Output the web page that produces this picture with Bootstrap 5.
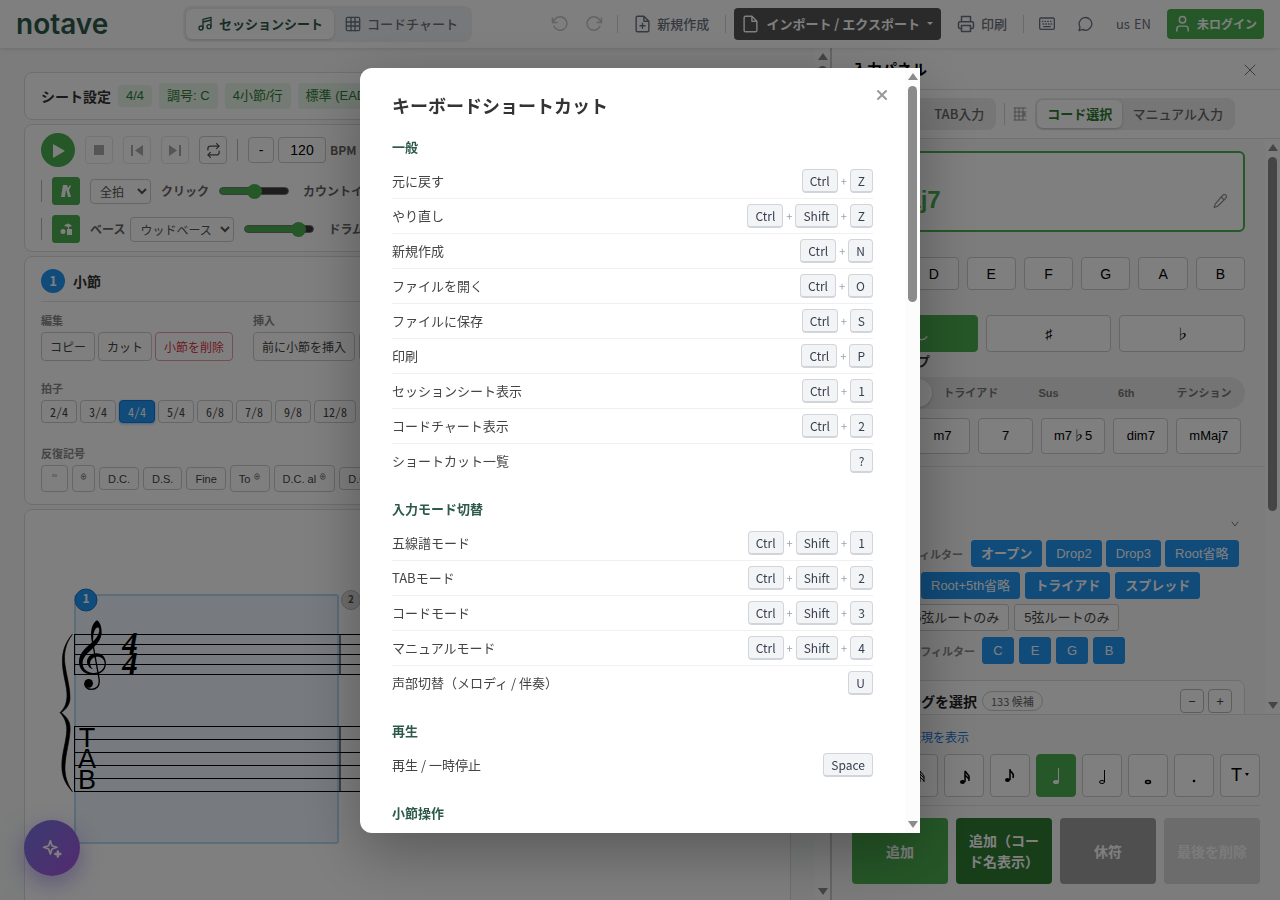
<!DOCTYPE html>
<html lang="ja">
<head>
<meta charset="utf-8">
<meta name="viewport" content="width=device-width, initial-scale=1">
<title>notave</title>
<link href="https://cdn.jsdelivr.net/npm/bootstrap@5.3.0/dist/css/bootstrap.min.css" rel="stylesheet">
<style>
:root{--jp:"Noto Sans CJK JP",sans-serif;--latin:"Liberation Sans","Noto Sans CJK JP",sans-serif;--green:#4caf50;--blue:#2196f3;--line:#ddd}
body{font:13px/20px var(--jp);color:#333;height:100vh;overflow:hidden;background:#f6f9f7}
button,input,select{font-family:inherit}
svg{flex:none}
.ico{fill:none;stroke:currentColor;stroke-width:2;stroke-linecap:round;stroke-linejoin:round}
.plain{border:0;background:none;padding:0}
.vline{width:1px;background:#d5d5d5;height:18px;flex:none}

.topbar{height:48px;background:#fff;box-shadow:0 1px 4px rgba(0,0,0,.12);z-index:2}
.brand{font:600 28px/34px Inter,sans-serif;color:#2d5a4a;width:167px;text-decoration:none}
.seg{background:#eff1f5;border-radius:8px;padding:3px}
.seg button{height:30px;border:0;border-radius:6px;background:none;color:#6b7280;font-weight:500;padding:0 11px;display:flex;align-items:center;gap:6px;white-space:nowrap}
.seg .on{background:#fff;color:#2d5a4a;font-weight:700;box-shadow:0 1px 3px rgba(0,0,0,.15)}
.tool{height:32px;border:0;background:none;color:#6b7280;padding:0 8px;display:flex;align-items:center;gap:6px;font-weight:500;white-space:nowrap}
.tool.sq{width:30px;padding:0;justify-content:center}
.tool.dim{opacity:.4}
.tool.dark{background:#555;color:#fff;border-radius:4px;font-weight:700;gap:7px}
.tool.login{background:var(--green);color:#fff;border-radius:4px;font-weight:700;font-size:12px;height:30px;padding:0 7px}

.sbar{width:15px;flex:none;background:#fcfcfc;padding:5px 3px;display:flex;flex-direction:column;align-items:center}
.sbar i{border:5px solid transparent;border-top-width:0;border-bottom:7px solid #8b8b8b;margin-bottom:6px}
.sbar i:last-child{border-bottom-width:0;border-top:7px solid #8b8b8b;margin:auto 0 0}
.sbar b{width:9px;border-radius:5px;background:#8b8b8b}

.box{background:#fff;border:1px solid var(--line);border-radius:8px;padding:0 16px;overflow:hidden;white-space:nowrap}
.chip{background:#e8f5e9;color:#2e7d32;border-radius:4px;padding:3px 8px;font:13px/20px var(--latin)}
.chip.low{padding-block:1px}
.name{font-size:14px;color:#333}
.round-play{width:34px;height:34px;border-radius:50%;background:var(--green);border:0;color:#fff;padding:0}
.row3{gap:10px;height:34px}
.row3.mid{height:48px}
.row3.end{height:28px}
.row3 .vline{height:22px;background:#bbb}
.sq28{width:28px;height:28px;border:1px solid #ccc;border-radius:4px;background:#fff;color:#555;padding:0;flex:none;display:flex;align-items:center;justify-content:center}
.sq28:disabled{border-color:#e6e6e6;color:#aaa}
.sq28.go{background:var(--green);border-color:var(--green);color:#fff;border-radius:3px}
.field{border:1px solid #ccc;border-radius:4px;background:#fff;color:#000;text-align:center;padding:0;width:48px;height:26px;font:14px/20px var(--latin)}
button.field{width:26px}
select.pick{height:25px;border:1px solid #ccc;border-radius:4px;background:#fff;color:#555;font-size:12px;padding:0 5px;flex:none;width:61px}
select.pick.wide{width:104px}
.lbl{font-size:12px;font-weight:700;color:#666}
.slide{appearance:none;-webkit-appearance:none;width:70px;height:16px;background:none;flex:none;margin:0}
.slide::-webkit-slider-runnable-track{height:8px;border-radius:4px;border:1px solid #777;background:linear-gradient(to right,var(--green) var(--v),#3b3b3b var(--v))}
.slide::-webkit-slider-thumb{-webkit-appearance:none;width:15px;height:15px;margin-top:-4px;border-radius:50%;background:var(--green)}
.cap{font-size:11px;line-height:16px;font-weight:700;color:#888;white-space:nowrap}
.gap3{gap:3px}
.gap5{gap:5px}
.mini{border:1px solid #ccc;border-radius:4px;background:#fff;color:#444;padding:0 8px;font-size:12px;height:29px;flex:none}
.mini.del{color:#dc3545;border-color:#e79aa2}
.mini.sig{height:23px;font:500 12px/20px "Noto Sans Mono CJK JP",var(--jp)}
.mini.sig.on{background:var(--blue);border-color:#1976d2;color:#fff;box-shadow:0 1px 3px rgba(33,150,243,.5)}
.mini.rep{height:23px;font:11px/20px var(--latin)}
.mini.rep.tall{height:27px}
.mini.rep sup{font-size:7px}
.mini.sign{width:27px;padding:0}
.mini.sign.slim{width:23px}
.num{width:24px;height:24px;border-radius:50%;background:var(--blue);color:#fff;font-weight:700;text-align:center;line-height:24px}
.stage{overflow:hidden;padding:24px 24px 0;min-width:0}
.barhead{height:45px;padding-top:4px}
.group1{gap:20px;padding-top:10px;height:75px}
.group2{height:65px;padding-top:3px}
.group3{padding-top:3px}

.panel{width:450px;flex:none;border-left:2px solid #ccc;background:#fff}
.panelhead{height:42px;padding:0 24px 0 20px}
.panelhead strong{font-size:15px;color:#000}
.paneltabs{height:49px;padding:0 45px 0 20px;gap:8px}
.bodybg{background:#f8f8f8}
.seg2{background:#ececec;border-radius:8px;padding:2px}
.seg2 button{border:0;background:none;border-radius:6px;height:28px;color:#666;padding:0 10px;font-weight:500;white-space:nowrap}
.seg2 .on{background:#fff;color:#2e7d32;font-weight:700;box-shadow:0 1px 3px rgba(0,0,0,.2)}
.chord{border:2px solid var(--green);border-radius:6px;height:81px;color:var(--green);background:#fff;font:700 24px/30px var(--latin)}
.picker{padding:12px 20px;height:328px}
.keys{margin-top:25px;height:33px}
.keys.tallkeys{height:37px}
.key{border:1px solid #ccc;border-radius:4px;background:#fff;color:#000;font:14px/20px var(--latin);padding:0;flex:1 1 0}
.key.go{background:var(--green);border-color:var(--green);color:#fff}
.typehead{line-height:18px;padding-bottom:7px}
.qual{height:36px;min-width:55px;flex:none;padding:0 12px;font-size:13px}
.pill{background:#e9e9e9;border-radius:16px;height:32px;padding:2px;margin-bottom:9px}
.pill button{flex:1 1 0;border:0;background:none;border-radius:14px;font:700 11px/16px var(--latin);color:#777;padding:0}
.pill .on{background:#fff;color:#333;box-shadow:0 1px 3px rgba(0,0,0,.2)}
.filters{padding:47px 20px 0}
.fold{height:26px;padding:7px 6px}
.flt{border:1px solid var(--blue);border-radius:3px;background:var(--blue);color:#fff;font:700 13px/20px var(--latin);height:27px;padding:0 9px;min-width:32px;white-space:nowrap;flex:none}
.flt.lat{font-weight:400}
.flt.first{width:64px}
.flt.off{background:#fff;border-color:#ccc;color:#444;font-weight:400}
.frow{margin-bottom:5px}
.frow.indent{padding-left:52px;margin-bottom:6px}
.cap.w1{width:115px;flex:none;padding-right:4px}
.cap.w2{width:125px;flex:none;padding-right:2px}
.voices{margin-top:16px;height:90px;padding:8px 12px}
.voices strong{font-size:14px;width:109px;line-height:24px;color:#222}
.count{border:1px solid #ccc;border-radius:12px;font-size:11px;line-height:18px;color:#666;padding:0 8px;margin-top:2px}
.step{width:24px;height:24px;border:1px solid #bbb;border-radius:4px;background:#fff;color:#444;padding:0;line-height:20px}
.foot{padding:12px 20px 16px}
.foot a{color:#1976d2;font-size:12px;padding-left:9px}
.notes{gap:6px;padding:7px 0 8px}
.note{width:40px;height:43px;border:1px solid #ccc;border-radius:4px;background:#fff;color:#000;padding:0;flex:none}
.note.on{background:var(--green);border-color:var(--green);color:#fff}
.note span{font:18px/20px var(--latin)}
.big{height:66px;border:0;border-radius:4px;color:#fff;font-weight:700;font-size:14px;line-height:21px;flex:1 1 0;padding:0 8px}
.big.b1{background:#4caf50}.big.b2{background:#2e7d32}.big.b3{background:#9e9e9e}.big.b4{background:#d8d8d8;color:#f6f6f6}

.fab{position:absolute;left:24px;bottom:24px;width:56px;height:56px;border:0;border-radius:50%;color:#fff;background:linear-gradient(135deg,#7477e0,#a855e0);box-shadow:0 8px 24px rgba(124,92,230,.5);z-index:3}

.modal{background:rgba(0,0,0,.5);--bs-modal-width:560px}
.modal-content{height:85vh;border:0;border-radius:12px 0 0 12px;flex-direction:row;box-shadow:0 20px 60px rgba(0,0,0,.3);color:#444}
.sheet{padding:0 32px;overflow:hidden;position:relative;border-radius:12px 0 0 12px}
.sheet h2{font-size:18px;line-height:26px;font-weight:700;color:#333;margin:24px 0 19px}
.sheet h3{font-size:13px;line-height:20px;font-weight:700;color:#2d5a4a;margin:0 0 7px}
.sheet ul{margin:0 0 20px;padding:0;list-style:none}
.sheet li{display:flex;justify-content:space-between;align-items:center;height:35px;border-bottom:1px solid #f0f0f0}
.sheet li:last-child{border:0}
.sheet li>span{display:flex;align-items:center;gap:3px;font-size:11px;color:#9ca3af}
kbd{background:#f3f4f6;color:#374151;border:1px solid #d1d5db;border-bottom-width:2px;border-radius:4px;padding:0 7px;font:12px/21px var(--jp);min-width:23px;text-align:center}
.shut{position:absolute;right:13px;top:17px;width:20px;height:20px;border:0;background:none;padding:0;color:#999;display:flex;align-items:center;justify-content:center}
</style>
</head>
<body class="d-flex flex-column">

<header class="topbar d-flex align-items-center px-3 flex-shrink-0">
  <a class="brand" href="#">notave</a>
  <nav class="seg d-flex">
    <button class="on"><svg class="ico" width="16" height="16" viewBox="0 0 24 24"><path d="M9 18V5l12-3v14M9 9l12-3"/><circle cx="6" cy="18" r="3"/><circle cx="18" cy="16" r="3"/></svg>セッションシート</button>
    <button><svg class="ico" width="16" height="16" viewBox="0 0 24 24"><rect x="2" y="2" width="20" height="20" rx="2"/><path d="M2 9h20M2 15h20M9 2v20M15 2v20"/></svg>コードチャート</button>
  </nav>
  <div class="d-flex align-items-center gap-2 ms-auto">
    <div class="d-flex gap-1">
      <button class="tool sq dim" disabled aria-label="元に戻す"><svg class="ico" width="18" height="18" viewBox="0 0 24 24"><path d="M2 4v6h6"/><path d="M4 15a9 9 0 1 0 1-9L2 10"/></svg></button>
      <button class="tool sq dim" disabled aria-label="やり直し"><svg class="ico" width="18" height="18" viewBox="0 0 24 24"><path d="M22 4v6h-6"/><path d="M20 15a9 9 0 1 1-1-9l3 4"/></svg></button>
    </div>
    <span class="vline"></span>
    <button class="tool"><svg class="ico" width="17" height="18" viewBox="0 0 24 24"><path d="M14 1H5a2 2 0 0 0-2 2v18a2 2 0 0 0 2 2h14a2 2 0 0 0 2-2V8zM14 1v7h7M12 11v7M8.500 14.500h7"/></svg>新規作成</button>
    <span class="vline"></span>
    <button class="tool dark"><svg class="ico" width="17" height="18" viewBox="0 0 24 24"><path d="M14 1H5a2 2 0 0 0-2 2v18a2 2 0 0 0 2 2h14a2 2 0 0 0 2-2V8zM14 1v7h7"/></svg>インポート / エクスポート<svg width="6" height="4" viewBox="0 0 6 4"><path d="M0 0h6L3 3z" fill="currentColor"/></svg></button>
    <button class="tool"><svg class="ico" width="18" height="18" viewBox="0 0 24 24"><path d="M6 9V2h12v7M6 18H4a2 2 0 0 1-2-2v-5a2 2 0 0 1 2-2h16a2 2 0 0 1 2 2v5a2 2 0 0 1-2 2h-2"/><path d="M6 14h12v8H6z"/></svg>印刷</button>
    <span class="vline"></span>
    <button class="tool sq" aria-label="キーボード"><svg class="ico" width="16" height="16" viewBox="0 0 24 24"><rect x="1" y="3" width="22" height="17" rx="2"/><path d="M5 8h1M9 8h1M13 8h1M17 8h1M6 12h1M10 12h1M14 12h1M18 12h1M7 16h10"/></svg></button>
    <button class="tool sq" aria-label="チャット"><svg class="ico" width="16" height="16" viewBox="0 0 24 24"><path d="M3 22l1.500-5.500A9.500 9.500 0 1 1 8 20z"/></svg></button>
    <button class="tool fw-normal gap-1"><span>us</span>EN</button>
    <button class="tool login"><svg class="ico" width="17" height="18" viewBox="0 0 24 24"><path d="M20 22v-3a4 4 0 0 0-4-4H8a4 4 0 0 0-4 4v3"/><circle cx="12" cy="6" r="4.500"/></svg>未ログイン</button>
  </div>
</header>

<div class="d-flex flex-grow-1" style="min-height:0">
  <main class="stage flex-grow-1">
    <section class="box d-flex align-items-center mb-1" style="height:48px;gap:7px">
      <strong class="name">シート設定</strong>
      <span class="chip low">4/4</span><span class="chip">調号: C</span><span class="chip">4小節/行</span><span class="chip">標準 (EADGBE)</span>
    </section>

    <section class="box mb-1 pt-2" style="height:128px">
      <div class="row3 d-flex align-items-center">
        <button class="round-play" aria-label="再生"><svg width="14" height="16" viewBox="0 0 14 16"><path d="M2 1l12 7-12 7z" fill="currentColor"/></svg></button>
        <button class="sq28" disabled aria-label="停止"><svg width="10" height="10"><rect width="10" height="10" fill="currentColor"/></svg></button>
        <button class="sq28" disabled aria-label="前へ"><svg width="12" height="11"><path d="M0 0h2v11H0zM12 0v11L4 5.500z" fill="currentColor"/></svg></button>
        <button class="sq28" disabled aria-label="次へ"><svg width="12" height="11"><path d="M10 0h2v11h-2zM0 0v11l8-5.500z" fill="currentColor"/></svg></button>
        <button class="sq28" aria-label="ループ"><svg class="ico" width="15" height="15" viewBox="0 0 24 24"><path d="M17 1l4 4-4 4M3 11V9a4 4 0 0 1 4-4h14M7 23l-4-4 4-4M21 13v2a4 4 0 0 1-4 4H3"/></svg></button>
        <span class="vline"></span>
        <div class="d-flex align-items-center gap-1"><button class="field">-</button><input class="field" id="bpm" value="120"><label class="lbl" for="bpm">BPM</label></div>
      </div>
      <div class="row3 mid d-flex align-items-center">
        <span class="vline"></span>
        <button class="sq28 go" aria-label="メトロノーム"><svg width="12" height="14"><path d="M3 1h4l1 3 2-3 1 1-2 4 2 7H8L6 5l-1 8H1z" fill="currentColor"/></svg></button>
        <select class="pick" aria-label="拍"><option>全拍</option></select>
        <label class="lbl" for="clk">クリック</label>
        <input class="slide" type="range" id="clk" value="50" style="--v:50%">
        <span class="lbl ms-1">カウントイン</span>
      </div>
      <div class="row3 end d-flex align-items-center">
        <span class="vline"></span>
        <button class="sq28 go" aria-label="バッキング"><svg width="14" height="14"><circle cx="4" cy="9.500" r="2.500" fill="currentColor"/><path d="M5 4q4-5 8 0l-3 1v2h3v6H8V7h1V5z" fill="currentColor"/></svg></button>
        <div class="d-flex align-items-center gap5"><label class="lbl" for="bas">ベース</label><select class="pick wide" id="bas"><option>ウッドベース</option></select></div>
        <input class="slide" type="range" value="86" aria-label="ベース音量" style="--v:80%">
        <span class="lbl ms-1">ドラム</span>
      </div>
    </section>

    <section class="box mb-1" style="height:249px">
      <div class="barhead d-flex align-items-center gap-2 border-bottom"><span class="num">1</span><strong class="name">小節</strong></div>
      <div class="group1 d-flex">
        <div><div class="cap gap3 mb-1">編集</div><div class="d-flex gap3"><button class="mini">コピー</button><button class="mini">カット</button><button class="mini del">小節を削除</button></div></div>
        <div><div class="cap mb-1">挿入</div><div class="d-flex gap-1"><button class="mini">前に小節を挿入</button><button class="mini">後に小節を挿入</button></div></div>
      </div>
      <div class="group2"><div class="cap mb-1">拍子</div><div class="d-flex gap3"><button class="mini sig">2/4</button><button class="mini sig">3/4</button><button class="mini sig on">4/4</button><button class="mini sig">5/4</button><button class="mini sig">6/8</button><button class="mini sig">7/8</button><button class="mini sig">9/8</button><button class="mini sig">12/8</button></div></div>
      <div class="group3"><div class="cap mb-1">反復記号</div><div class="d-flex align-items-center gap-1"><button class="mini rep tall sign"><sup>𝄉</sup></button><button class="mini rep tall sign slim"><sup>⊕</sup></button><button class="mini rep">D.C.</button><button class="mini rep">D.S.</button><button class="mini rep">Fine</button><button class="mini rep tall">To <sup>⊕</sup></button><button class="mini rep tall">D.C. al <sup>⊕</sup></button><button class="mini rep">D.C. al Fine</button></div></div>
    </section>

    <section class="box p-0" style="height:420px">
      <svg width="100%" height="400">
        <g transform="translate(-25,-510)">
          <rect x="75" y="595" width="263" height="248" rx="2" fill="#2196f3" fill-opacity=".08" stroke="#b4dcf4" stroke-width="2"/>
          <g stroke="#000"><path d="M74 634.500H800M74 644.500H800M74 654.500H800M74 664.500H800M74 674.500H800M74 726.500H800M74 739.500H800M74 752.500H800M74 765.500H800M74 778.500H800M74 791.500H800M74.500 634v41M74.500 726v66M340 634v41M340 726v66"/></g>
          <g transform="translate(0,580) scale(.3333)">
            <path d="M217 163C190 195 185 225 188 260C192 300 205 330 200 360C197 380 188 390 180 398C188 406 197 418 200 440C203 470 188 510 186 545C184 580 190 605 217 635C198 605 192 580 196 545C200 505 212 470 210 440C209 420 196 408 184 398C198 388 209 375 210 355C211 325 200 290 195 255C190 220 197 190 217 163Z" stroke="#000" stroke-width="2"/>
            <path d="M277 192C268 155 276 130 291 121C300 126 306 142 305 160C302 192 272 207 254 230C240 250 250 276 278 279C300 280 314 268 314 250C313 236 303 229 290 230C275 232 268 244 271 255C273 262 276 265 280 268C266 264 260 252 261 243C263 230 274 220 290 220C308 220 318 234 318 252C317 272 300 285 277 284C250 283 236 265 237 243C238 215 262 200 281 182C296 168 301 150 296 143C288 138 277 155 280 190Z"/>
            <path d="M278 188L297 295C301 320 288 328 274 328C262 328 255 320 254 310" fill="none" stroke="#000" stroke-width="4"/><circle cx="266" cy="310" r="13"/>
          </g>
          <g font-family="Liberation Serif, serif" font-weight="700" font-style="italic" font-size="31" text-anchor="middle"><text x="130" y="654">4</text><text x="130" y="674">4</text></g>
          <g font-family="Liberation Sans, sans-serif" font-size="27" text-anchor="middle"><text x="87" y="747">T</text><text x="87" y="768">A</text><text x="87" y="789">B</text></g>
          <circle cx="86" cy="600" r="11" fill="#2196f3" stroke="#1976d2"/><circle cx="351" cy="600" r="9.500" fill="#ddd" stroke="#bbb"/>
          <g font-family="Noto Sans CJK JP, sans-serif" font-weight="700" text-anchor="middle"><text x="86" y="603" font-size="12" fill="#fff">1</text><text x="351" y="603" font-size="10" fill="#555">2</text></g>
        </g>
      </svg>
    </section>
  </main>
  <div class="sbar"><i></i><b style="height:400px"></b><i></i></div>

  <aside class="panel d-flex flex-column">
    <div class="panelhead d-flex align-items-center justify-content-between border-bottom flex-shrink-0"><strong>入力パネル</strong><button class="plain" aria-label="閉じる"><svg class="ico" width="12" height="12" viewBox="0 0 12 12" stroke="#666"><path d="M1 1l10 10M11 1L1 11" stroke="#777" stroke-width="1"/></svg></button></div>
    <div class="paneltabs d-flex align-items-center border-bottom flex-shrink-0">
      <div class="seg2 d-flex flex-grow-1 justify-content-end"><button class="px-1">五線譜</button><button>TAB入力</button></div>
      <span class="vline" style="height:22px"></span>
      <svg class="ico" width="14" height="14" viewBox="0 0 14 14" style="stroke-width:1;color:#999"><path d="M1 1h12M1 5h12M1 9h12M1 13h12M2 1v12M6 1v12M10 1v12"/><circle cx="11" cy="7" r="1"/></svg>
      <div class="seg2 d-flex"><button class="on">コード選択</button><button>マニュアル入力</button></div>
    </div>
    <div class="d-flex flex-grow-1 bodybg" style="min-height:0">
      <div class="flex-grow-1 overflow-hidden" style="min-width:0">
        <div class="picker border-bottom">
          <div class="chord d-flex align-items-center justify-content-between px-3"><span class="pt-3">CMaj7</span><button class="plain pt-3" aria-label="編集"><svg class="ico" width="14" height="14" viewBox="0 0 24 24" style="color:#888"><path d="M17 2a3 3 0 0 1 5 5L8 21l-6 2 2-6zM14 5l5 5"/></svg></button></div>
          <div class="keys d-flex gap-2"><button class="key">C</button><button class="key">D</button><button class="key">E</button><button class="key">F</button><button class="key">G</button><button class="key">A</button><button class="key">B</button></div>
          <div class="keys tallkeys d-flex gap-2"><button class="key go">なし</button><button class="key">♯</button><button class="key">♭</button></div>
          <div class="typehead fw-bold">コードタイプ</div>
          <div class="pill d-flex"><button class="on">7th</button><button>トライアド</button><button>Sus</button><button>6th</button><button>テンション</button></div>
          <div class="d-flex gap-2"><button class="key qual">M7</button><button class="key qual">m7</button><button class="key qual">7</button><button class="key qual">m7♭5</button><button class="key qual">dim7</button><button class="key qual">mMaj7</button></div>
        </div>
        <div class="filters">
          <div class="fold d-flex justify-content-end"><svg class="ico" width="8" height="6" viewBox="0 0 8 6" style="color:#777;stroke-width:1"><path d="M1 1l3 4 3-4"/></svg></div>
          <div class="frow d-flex gap-1 align-items-center"><span class="cap w1 text-end">ボイシングフィルター</span><button class="flt">オープン</button><button class="flt lat">Drop2</button><button class="flt lat">Drop3</button><button class="flt lat">Root省略</button></div>
          <div class="frow d-flex gap5"><button class="flt lat first px-0">5th省略</button><button class="flt lat">Root+5th省略</button><button class="flt">トライアド</button><button class="flt">スプレッド</button></div>
          <div class="frow indent d-flex gap5"><button class="flt off">6弦ルートのみ</button><button class="flt off">5弦ルートのみ</button></div>
          <div class="d-flex align-items-center gap5"><span class="cap w2 text-end">構成音フィルター</span><button class="flt lat">C</button><button class="flt lat">E</button><button class="flt lat">G</button><button class="flt lat">B</button></div>
          <div class="box voices d-flex align-items-start gap-2"><strong class="text-end">ボイシングを選択</strong><span class="count">133 候補</span><div class="d-flex gap-1 ms-auto"><button class="step">−</button><button class="step">+</button></div></div>
        </div>
      </div>
      <div class="sbar"><i></i><b style="height:354px"></b><i></i></div>
    </div>
    <div class="foot bodybg border-top flex-shrink-0">
      <a href="#" class="text-decoration-none d-block">その他の表現を表示</a>
      <div class="notes d-flex border-bottom">
        <button class="note" aria-label="64分音符"><svg width="16" height="18"><path d="M9 2v12M9 2l5 4M9 5l5 4M9 8l5 4" stroke="#000" fill="none"/><ellipse cx="6" cy="14" rx="3" ry="2"/></svg></button>
        <button class="note" aria-label="32分音符"><svg width="16" height="18"><path d="M10 3v11M10 3l4 5v6M10 6l4 4M10 9l4 4" stroke="#000" fill="none"/><ellipse cx="7" cy="14" rx="3" ry="2"/></svg></button>
        <button class="note" aria-label="16分音符"><svg width="16" height="18"><path d="M9 3v11M9 3l4 5v5M9 7l4 4" stroke="#000" stroke-width="1.500" fill="none"/><ellipse cx="6.500" cy="14" rx="2.500" ry="2"/></svg></button>
        <button class="note" aria-label="8分音符"><svg width="16" height="18"><path d="M8 1v11M8 2c1 3 5 3 3 8" stroke="#000" stroke-width="1.500" fill="none"/><ellipse cx="5.500" cy="12" rx="2.500" ry="2"/></svg></button>
        <button class="note on" aria-label="4分音符"><svg width="12" height="20"><path d="M8.500 2v14" stroke="#fff"/><ellipse cx="6" cy="16" rx="3" ry="2" fill="#fff"/></svg></button>
        <button class="note" aria-label="2分音符"><svg width="12" height="18"><path d="M8.500 2v12" stroke="#000"/><ellipse cx="6" cy="14" rx="2.500" ry="1.500" fill="none" stroke="#000"/></svg></button>
        <button class="note" aria-label="全音符"><svg width="12" height="18"><ellipse cx="6" cy="14" rx="2.500" ry="1.500" fill="none" stroke="#000" stroke-width="1.500"/></svg></button>
        <button class="note" aria-label="付点"><svg width="12" height="18"><circle cx="6" cy="13" r="1.300"/></svg></button>
        <button class="note"><span>T</span> <svg width="4" height="4" class="mb-1"><path d="M0 0h4L2 3z"/></svg></button>
      </div>
      <div class="d-flex gap-2" style="padding-top:12px">
        <button class="big b1">追加</button><button class="big b2">追加（コード名表示）</button><button class="big b3">休符</button><button class="big b4" disabled>最後を削除</button>
      </div>
    </div>
  </aside>
</div>

<button class="fab" aria-label="AI"><svg class="ico" width="20" height="20" viewBox="0 0 24 24"><path d="M10 2l2 6 6 2-6 2-2 6-2-6-6-2 6-2z"/><path d="M19 15v6M16 18h6" stroke-width="3"/></svg></button>

<div class="modal d-block" role="dialog" aria-modal="true" aria-labelledby="ttl">
  <div class="modal-dialog modal-dialog-centered">
    <div class="modal-content">
      <div class="sheet flex-grow-1">
        <button class="shut" aria-label="閉じる"><svg class="ico" width="12" height="12" viewBox="0 0 12 12"><path d="M2 2l8 8M10 2l-8 8"/></svg></button>
        <h2 id="ttl">キーボードショートカット</h2>
        <h3>一般</h3>
        <ul>
          <li>元に戻す<span><kbd>Ctrl</kbd>+<kbd>Z</kbd></span></li>
          <li>やり直し<span><kbd>Ctrl</kbd>+<kbd>Shift</kbd>+<kbd>Z</kbd></span></li>
          <li>新規作成<span><kbd>Ctrl</kbd>+<kbd>N</kbd></span></li>
          <li>ファイルを開く<span><kbd>Ctrl</kbd>+<kbd>O</kbd></span></li>
          <li>ファイルに保存<span><kbd>Ctrl</kbd>+<kbd>S</kbd></span></li>
          <li>印刷<span><kbd>Ctrl</kbd>+<kbd>P</kbd></span></li>
          <li>セッションシート表示<span><kbd>Ctrl</kbd>+<kbd>1</kbd></span></li>
          <li>コードチャート表示<span><kbd>Ctrl</kbd>+<kbd>2</kbd></span></li>
          <li>ショートカット一覧<span><kbd>?</kbd></span></li>
        </ul>
        <h3>入力モード切替</h3>
        <ul>
          <li>五線譜モード<span><kbd>Ctrl</kbd>+<kbd>Shift</kbd>+<kbd>1</kbd></span></li>
          <li>TABモード<span><kbd>Ctrl</kbd>+<kbd>Shift</kbd>+<kbd>2</kbd></span></li>
          <li>コードモード<span><kbd>Ctrl</kbd>+<kbd>Shift</kbd>+<kbd>3</kbd></span></li>
          <li>マニュアルモード<span><kbd>Ctrl</kbd>+<kbd>Shift</kbd>+<kbd>4</kbd></span></li>
          <li>声部切替（メロディ / 伴奏）<span><kbd>U</kbd></span></li>
        </ul>
        <h3>再生</h3>
        <ul><li>再生 / 一時停止<span><kbd>Space</kbd></span></li></ul>
        <h3>小節操作</h3>
      </div>
      <div class="sbar"><i></i><b style="height:216px"></b><i></i></div>
    </div>
  </div>
</div>
<script src="https://cdn.jsdelivr.net/npm/bootstrap@5.3.0/dist/js/bootstrap.bundle.min.js"></script>
</body>
</html>
